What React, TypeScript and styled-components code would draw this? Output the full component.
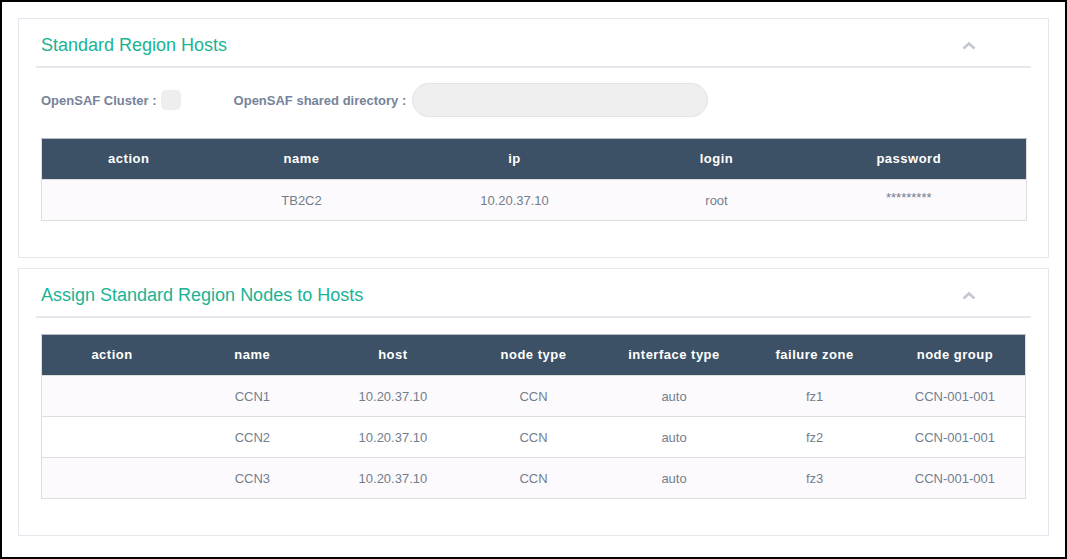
import React from 'react';
import styled, { createGlobalStyle } from 'styled-components';

interface Host {
  name: string;
  ip: string;
  login: string;
  password: string;
}

interface NodeRow {
  name: string;
  host: string;
  nodeType: string;
  interfaceType: string;
  failureZone: string;
  nodeGroup: string;
}

const hosts: Host[] = [
  { name: 'TB2C2', ip: '10.20.37.10', login: 'root', password: '*********' },
];

const nodes: NodeRow[] = [
  { name: 'CCN1', host: '10.20.37.10', nodeType: 'CCN', interfaceType: 'auto', failureZone: 'fz1', nodeGroup: 'CCN-001-001' },
  { name: 'CCN2', host: '10.20.37.10', nodeType: 'CCN', interfaceType: 'auto', failureZone: 'fz2', nodeGroup: 'CCN-001-001' },
  { name: 'CCN3', host: '10.20.37.10', nodeType: 'CCN', interfaceType: 'auto', failureZone: 'fz3', nodeGroup: 'CCN-001-001' },
];

const hostCols = [174, 172, 254, 150, 235];

const ChevronUp = () => (
  <svg width="14" height="9" viewBox="0 0 14 9">
    <polyline points="1.5,7.5 7,2.5 12.5,7.5" fill="none" stroke="#c3c7d1" strokeWidth="2.6" />
  </svg>
);

const App: React.FC = () => {
  return (
    <>
      <GlobalStyle />
      <Frame>
        <Card>
          <CardHeader>
            <Title>Standard Region Hosts</Title>
            <Toggle><ChevronUp /></Toggle>
          </CardHeader>
          <OptionsRow>
            <Label>OpenSAF Cluster :</Label>
            <Checkbox />
            <Label $spaced>OpenSAF shared directory :</Label>
            <TextInput />
          </OptionsRow>
          <Table>
            <colgroup>
              {hostCols.map((w, i) => <col key={i} style={{ width: w }} />)}
            </colgroup>
            <thead>
              <tr>
                <Th>action</Th>
                <Th>name</Th>
                <Th>ip</Th>
                <Th>login</Th>
                <Th>password</Th>
              </tr>
            </thead>
            <tbody>
              {hosts.map((h, i) => (
                <Tr key={h.name} $odd={i % 2 === 0}>
                  <Td />
                  <Td>{h.name}</Td>
                  <Td>{h.ip}</Td>
                  <Td>{h.login}</Td>
                  <Td $raised>{h.password}</Td>
                </Tr>
              ))}
            </tbody>
          </Table>
        </Card>

        <Card>
          <CardHeader>
            <Title>Assign Standard Region Nodes to Hosts</Title>
            <Toggle><ChevronUp /></Toggle>
          </CardHeader>
          <Table $top={16}>
            <thead>
              <tr>
                <Th>action</Th>
                <Th>name</Th>
                <Th>host</Th>
                <Th>node type</Th>
                <Th>interface type</Th>
                <Th>failure zone</Th>
                <Th>node group</Th>
              </tr>
            </thead>
            <tbody>
              {nodes.map((n, i) => (
                <Tr key={n.name} $odd={i % 2 === 0}>
                  <Td />
                  <Td>{n.name}</Td>
                  <Td>{n.host}</Td>
                  <Td>{n.nodeType}</Td>
                  <Td>{n.interfaceType}</Td>
                  <Td>{n.failureZone}</Td>
                  <Td>{n.nodeGroup}</Td>
                </Tr>
              ))}
            </tbody>
          </Table>
        </Card>
      </Frame>
    </>
  );
};

export default App;

// Styled Components
const GlobalStyle = createGlobalStyle`
  html, body {
    margin: 0;
    padding: 0;
    background: #fff;
  }
  body {
    font-family: "Liberation Sans", Arial, sans-serif;
  }
`;

const Frame = styled.div`
  box-sizing: border-box;
  width: 1067px;
  height: 559px;
  border: 2px solid #000;
  padding: 16px 16px 0 16px;
  display: flex;
  flex-direction: column;
  gap: 10px;
`;

const Card = styled.section`
  border: 1px solid #e6e7ee;
  padding: 0 22px 36px;
  background: #fff;
`;

const CardHeader = styled.div`
  display: flex;
  align-items: center;
  justify-content: space-between;
  height: 47px;
  margin: 0 -5px;
  padding: 0 5px;
  border-bottom: 2px solid #e5e8ed;
`;

const Title = styled.h3`
  margin: 0;
  margin-top: 6px;
  font-size: 18px;
  font-weight: normal;
  color: #1ab394;
`;

const Toggle = styled.span`
  display: flex;
  margin-right: 50px;
  margin-top: 6px;
  cursor: pointer;
`;

const OptionsRow = styled.div`
  display: flex;
  align-items: center;
  height: 34px;
  margin-top: 15px;
`;

const Label = styled.label<{ $spaced?: boolean }>`
  font-size: 13px;
  font-weight: bold;
  color: #76839a;
  margin-left: ${p => (p.$spaced ? '53px' : '0')};
  margin-right: ${p => (p.$spaced ? '6px' : '4px')};
`;

const Checkbox = styled.span`
  display: inline-block;
  width: 20px;
  height: 20px;
  border-radius: 5px;
  background: #eeeeee;
`;

const TextInput = styled.input`
  box-sizing: border-box;
  width: 296px;
  height: 34px;
  border: 1px solid #e1e1ea;
  border-radius: 17px;
  background: #efefef;
  outline: none;
`;

const Table = styled.table<{ $top?: number }>`
  width: 100%;
  margin-top: ${p => p.$top ?? 21}px;
  border-collapse: collapse;
  table-layout: fixed;
  border: 1px solid #dedede;
`;

const Th = styled.th`
  height: 38px;
  padding: 0 0 2px;
  background: #3c5165;
  border-top: 1px solid #b8bcc2;
  color: #fff;
  font-size: 13px;
  font-weight: bold;
  letter-spacing: 0.5px;
  text-align: center;
  vertical-align: middle;
`;

const Tr = styled.tr<{ $odd: boolean }>`
  background: ${p => (p.$odd ? '#fdfafd' : '#ffffff')};
  border-top: 1px solid #dedede;
`;

const Td = styled.td<{ $raised?: boolean }>`
  height: ${p => (p.$raised ? '34px' : '40px')};
  padding: 0 0 ${p => (p.$raised ? '6px' : '0')};
  font-size: 13px;
  color: #717e8e;
  text-align: center;
  vertical-align: middle;
`;
